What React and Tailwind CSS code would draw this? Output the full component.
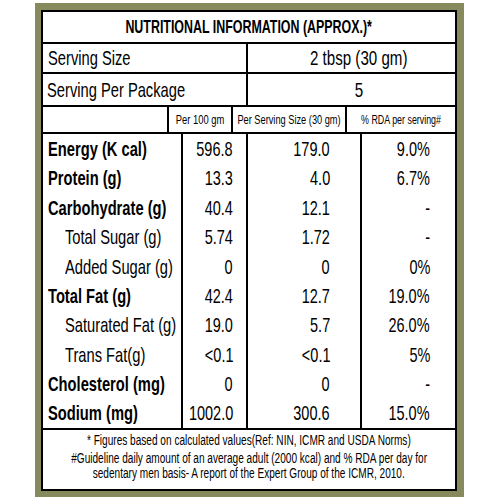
import React from 'react';

const font = { fontFamily: '"Liberation Sans", Arial, sans-serif' };

const rows = [
  { label: 'Energy (K cal)', bold: true, a: '596.8', b: '179.0', c: '9.0%' },
  { label: 'Protein (g)', bold: true, a: '13.3', b: '4.0', c: '6.7%' },
  { label: 'Carbohydrate (g)', bold: true, a: '40.4', b: '12.1', c: '-' },
  { label: 'Total Sugar (g)', a: '5.74', b: '1.72', c: '-' },
  { label: 'Added Sugar (g)', a: '0', b: '0', c: '0%' },
  { label: 'Total Fat (g)', bold: true, a: '42.4', b: '12.7', c: '19.0%' },
  { label: 'Saturated Fat (g)', a: '19.0', b: '5.7', c: '26.0%' },
  { label: 'Trans Fat(g)', a: '<0.1', b: '<0.1', c: '5%' },
  { label: 'Cholesterol (mg)', bold: true, a: '0', b: '0', c: '-' },
  { label: 'Sodium (mg)', bold: true, a: '1002.0', b: '300.6', c: '15.0%' },
];

// condensed look: narrow the glyphs horizontally
const L = ({ children }) => <span className="inline-block whitespace-nowrap origin-left scale-x-[0.7]">{children}</span>;
const R = ({ children }) => <span className="inline-block whitespace-nowrap origin-right scale-x-[0.69]">{children}</span>;
const C = ({ children, className = 'scale-x-[0.72]' }) => (
  <span className={`inline-block whitespace-nowrap origin-center ${className}`}>{children}</span>
);

export default function App() {
  return (
    <div className="w-[500px] h-[500px] bg-white pt-[3px] pl-[35px] text-black" style={font}>
      <div className="w-[429px] h-[494px] bg-[#878a5c] pt-[7px] pl-[6px]">
        <div className="w-[416px] h-[481px] bg-white border-2 border-black flex flex-col">
          {/* title */}
          <div className="h-[32px] border-b-2 border-black flex items-center justify-center font-bold text-[18px]">
            <C className="scale-x-[0.69]">NUTRITIONAL INFORMATION (APPROX.)*</C>
          </div>

          {/* serving */}
          <div className="h-[30px] border-b-2 border-black flex text-[21px]">
            <div className="w-[205px] border-r-2 border-black pl-[5px] flex items-center"><L>Serving Size</L></div>
            <div className="flex-1 flex items-center justify-center pl-[14px]"><C>2 tbsp (30 gm)</C></div>
          </div>
          <div className="h-[33px] border-b-2 border-black flex text-[21px]">
            <div className="w-[205px] border-r-2 border-black pl-[4px] flex items-center"><L>Serving Per Package</L></div>
            <div className="flex-1 flex items-center justify-center pl-[14px]"><C>5</C></div>
          </div>

          {/* header */}
          <div className="h-[27px] border-b-2 border-black flex text-[12px]">
            <div className="w-[140px] border-r-2 border-black"></div>
            <div className="w-[65px] border-r-2 border-black flex items-center justify-center"><C className="scale-x-[0.78]">Per 100 gm</C></div>
            <div className="w-[114px] border-r-2 border-black flex items-center justify-center"><C className="scale-x-[0.77]">Per Serving Size (30 gm)</C></div>
            <div className="flex-1 flex items-center justify-center"><C className="scale-x-[0.74]">% RDA per serving#</C></div>
          </div>

          {/* data */}
          <div className="h-[296px] border-b-2 border-black flex text-[21px]">
            <div className="w-[140px] border-r-2 border-black flex flex-col">
              {rows.map((r, i) => (
                <div
                  key={i}
                  className={`h-[29.4px] flex items-center ${r.bold ? 'font-bold pl-[5px]' : 'pl-[22px]'}`}
                >
                  <L>{r.label}</L>
                </div>
              ))}
            </div>
            <div className="w-[65px] border-r-2 border-black flex flex-col">
              {rows.map((r, i) => (
                <div key={i} className="h-[29.4px] flex items-center justify-end pr-[13px]"><R>{r.a}</R></div>
              ))}
            </div>
            <div className="w-[114px] border-r-2 border-black flex flex-col">
              {rows.map((r, i) => (
                <div key={i} className="h-[29.4px] flex items-center justify-end pr-[30px]"><R>{r.b}</R></div>
              ))}
            </div>
            <div className="flex-1 flex flex-col">
              {rows.map((r, i) => (
                <div key={i} className="h-[29.4px] flex items-center justify-end pr-[25px]"><R>{r.c}</R></div>
              ))}
            </div>
          </div>

          {/* footer */}
          <div className="flex-1 flex flex-col items-center pt-[3px] text-[14px] leading-[15px] text-center">
            <C>* Figures based on calculated values(Ref: NIN, ICMR and USDA Norms)</C>
            <C className="scale-x-[0.72] mt-[3px]">#Guideline daily amount of an average adult (2000 kcal) and % RDA per day for</C>
            <C>sedentary men basis- A report of the Expert Group of the ICMR, 2010.</C>
          </div>
        </div>
      </div>
    </div>
  );
}
